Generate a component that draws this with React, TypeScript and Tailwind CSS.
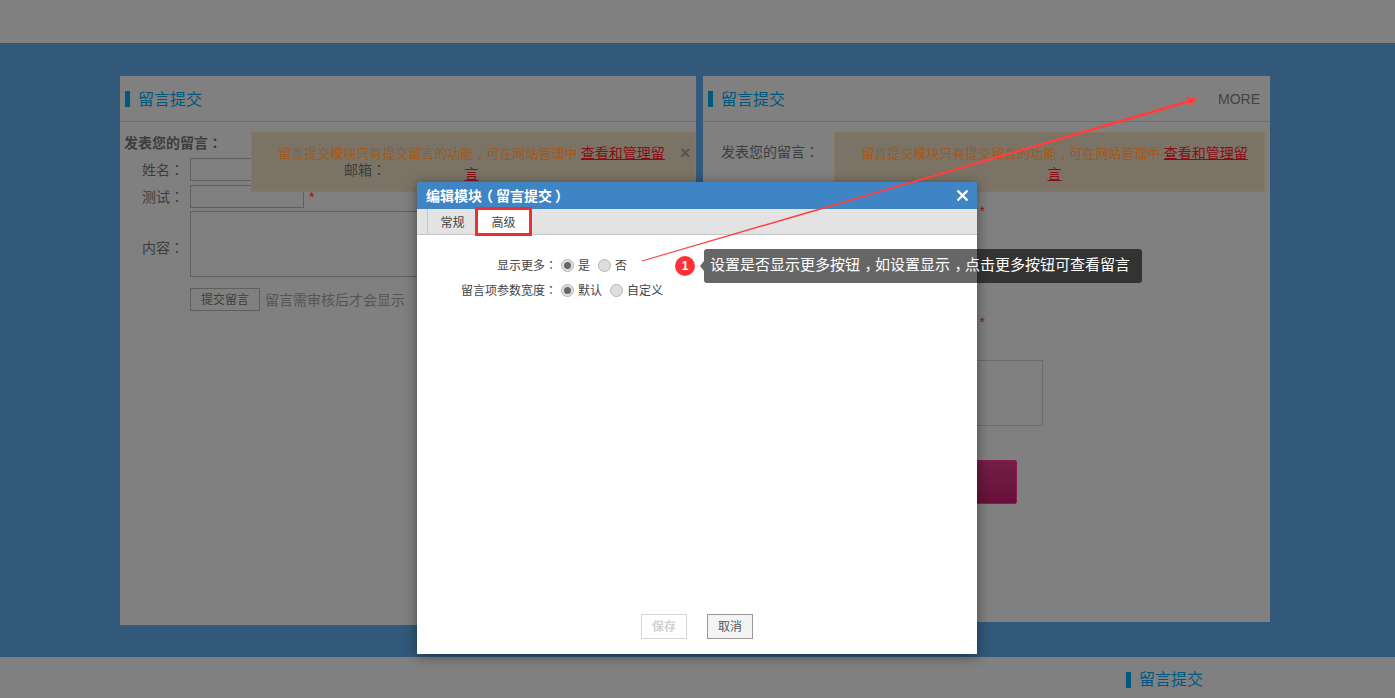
import React from 'react'

// colon sits centered in the cell in the original font, TC glyphs do that
function Mark({ children }: { children: React.ReactNode }) {
  return <span className="font-['Liberation_Sans','Noto_Sans_CJK_TC',sans-serif]">{children}</span>
}

function Comma() {
  return <span className="relative left-[0.3em]">，</span>
}

function PanelTitle({ more }: { more?: boolean }) {
  return (
    <div className="flex h-[46px] items-center justify-between border-b border-[#6f6f6f] pl-[5px] pr-[10px]">
      <div className="flex items-center gap-[8px]">
        <span className="h-4 w-[5px] bg-[#00587f]" />
        <span className="pt-[2px] text-base text-[#00587f]">留言提交</span>
      </div>
      {more && <span className="text-sm text-[#444]">MORE</span>}
    </div>
  )
}

function Notice({ className }: { className: string }) {
  return (
    <div className={`absolute top-[56px] h-[60px] border border-[#83785f] bg-[#7b7466] pt-[10px] text-center text-[13px] leading-[20px] text-[#a05a20] ${className}`}>
      留言提交模块只有提交留言的功能<Comma />可在网站管理中{' '}
      <span className="text-sm text-[#8c0c14] underline">查看和管理留言</span>
    </div>
  )
}

function LeftRow({ label, labelClass, children }: { label: string; labelClass?: string; children: React.ReactNode }) {
  return (
    <div className="flex items-center">
      <span className={`w-[66px] pr-[6px] text-right text-sm text-[#3d3d3d] ${labelClass ?? ''}`}>
        {label}<Mark>：</Mark>
      </span>
      {children}
    </div>
  )
}

function Radio({ on, label }: { on?: boolean; label: string }) {
  return (
    <span className="flex items-center gap-[4px]">
      <span className="flex h-[13px] w-[13px] items-center justify-center rounded-full border border-[#b4b4b4] bg-[#dedede]">
        {on && <span className="h-[7px] w-[7px] rounded-full bg-[#666]" />}
      </span>
      <span>{label}</span>
    </span>
  )
}

export default function App() {
  return (
    <div className="relative h-[698px] w-[1395px] overflow-hidden bg-[#808080] font-['Liberation_Sans','Noto_Sans_CJK_SC',sans-serif]">
      <div className="h-[43px]" />

      <div className="h-[614px] bg-[#32597a] pl-[120px] pt-[33px]">
        <div className="flex items-start gap-[7px]">
          {/* left module */}
          <div className="relative h-[549px] w-[576px] bg-[#808080]">
            <PanelTitle />
            <div className="flex flex-col pl-[4px] pt-[11px]">
              <div className="text-sm font-bold leading-[20px] text-[#3d3d3d]">发表您的留言<Mark>：</Mark></div>
              <div className="mt-[5px] flex flex-col gap-[4px]">
                <LeftRow label="姓名">
                  <span className="h-[23px] w-[114px] border border-[#5f5f5f]" />
                  <span className="relative z-10 ml-[40px] text-sm text-[#3d3d3d]">邮箱<Mark>：</Mark></span>
                </LeftRow>
                <LeftRow label="测试">
                  <span className="h-[23px] w-[114px] border border-[#5f5f5f]" />
                  <span className="ml-[5px] text-sm text-[#8c1a1a]">*</span>
                </LeftRow>
                <div className="-mt-[1px]">
                  <LeftRow label="内容" labelClass="pt-[8px]">
                    <span className="h-[66px] w-[300px] border border-[#5f5f5f]" />
                  </LeftRow>
                </div>
              </div>
              <div className="ml-[66px] mt-[11px] flex items-center">
                <span className="flex h-[23px] w-[70px] items-center justify-center border border-[#5f5f5f] text-xs text-[#3d3d3d]">提交留言</span>
                <span className="ml-[5px] text-sm text-[#555]">留言需审核后才会显示</span>
              </div>
            </div>
            <Notice className="left-[131px] w-[445px] pl-[25px] pr-[29px]" />
            <span className="absolute left-[560px] top-[67px] text-lg font-bold leading-[20px] text-[#555]">×</span>
          </div>

          {/* right module */}
          <div className="relative h-[546px] w-[567px] bg-[#808080]">
            <PanelTitle more />
            <div className="pl-[18px] pt-[20px] text-sm leading-[20px] text-[#3d3d3d]">发表您的留言<Mark>：</Mark></div>
            <div className="ml-[127px] mt-[39px] flex h-[20px] w-[155px] items-center justify-end text-sm text-[#8c1a1a]">*</div>
            <div className="ml-[127px] mt-[91px] flex h-[20px] w-[155px] items-center justify-end text-sm text-[#8c1a1a]">*</div>
            <div className="ml-[127px] mt-[28px] h-[66px] w-[213px] border border-[#6c6c6c]" />
            <div className="ml-[127px] mt-[34px] h-[44px] w-[187px] rounded-[2px] border border-[#8a1a52] bg-gradient-to-b from-[#701f45] to-[#680f3a]" />
            <Notice className="left-[131px] w-[431px] pl-[24px] pr-[14px]" />
          </div>
        </div>
      </div>

      <div className="flex h-[41px] items-center gap-[8px] pl-[1126px] pt-[5px]">
        <span className="h-4 w-[5px] bg-[#00587f]" />
        <span className="text-base text-[#00587f]">留言提交</span>
      </div>

      {/* dialog */}
      <div className="absolute left-[417px] top-[182px] flex h-[472px] w-[560px] flex-col bg-white shadow-[0_2px_12px_rgba(0,0,0,0.45)]">
        <div className="flex h-[27px] items-center justify-between bg-[#3f85c5] pl-[9px] pr-[8px] text-sm font-bold text-white">
          <span>
            编辑模块<span className="relative left-[-3px]">（</span>留言提交<span className="relative left-[3px]">）</span>
          </span>
          <svg width="13" height="13" viewBox="0 0 13 13" fill="none" stroke="white" strokeWidth="2.4">
            <path d="M1.5 1.5l10 10M11.5 1.5l-10 10" />
          </svg>
        </div>
        <div className="flex h-[26px] border-b border-[#c6c6c6] bg-[#e3e3e3] pl-[10px] text-xs text-[#444]">
          <span className="flex w-[48px] items-center justify-center border-l border-[#c6c6c6] pl-[2px] pt-[2px]">常规</span>
          <span className="relative -mt-[2px] flex h-[29px] w-[57px] items-center justify-center border-[3px] border-[#ee2f2f] bg-white pt-[2px]">高级</span>
        </div>
        <div className="flex flex-1 flex-col gap-[10px] pt-[23px] text-xs text-[#444]">
          <div className="flex h-[15px] items-center">
            <span className="w-[140px] text-right">显示更多<Mark>：</Mark></span>
            <div className="ml-[4px] flex gap-[8px]">
              <Radio on label="是" />
              <Radio label="否" />
            </div>
          </div>
          <div className="flex h-[15px] items-center">
            <span className="w-[140px] text-right">留言项参数宽度<Mark>：</Mark></span>
            <div className="ml-[4px] flex gap-[8px]">
              <Radio on label="默认" />
              <Radio label="自定义" />
            </div>
          </div>
        </div>
        <div className="flex justify-center gap-[20px] pb-[15px] text-xs">
          <span className="flex h-[25px] w-[46px] items-center justify-center border border-[#d4d4d4] font-bold text-[#d0d0d0]">保存</span>
          <span className="flex h-[25px] w-[46px] items-center justify-center border border-[#999] bg-[#f4f4f4] text-[#555]">取消</span>
        </div>
      </div>

      {/* tutorial arrow, the shaft gets thicker towards the head */}
      <svg className="absolute left-0 top-0" width="1395" height="698" fill="none">
        <path d="M642 261.5L1189.6 102.6L1188.8 99.8L641.8 260.5Z" fill="#ff3f3f" />
        <path d="M1198 99L1186 96.5L1189 106Z" fill="#ff3f3f" />
      </svg>

      {/* tutorial tip */}
      <div className="absolute left-[675px] top-[249px] flex items-center">
        <span className="flex h-[20px] w-[20px] items-center justify-center rounded-full bg-[#ff3236] text-xs font-bold text-white">1</span>
        <span className="ml-[5px] h-0 w-0 border-y-[5px] border-r-[4px] border-y-transparent border-r-[#666]" />
        <span className="flex h-[34px] w-[438px] items-center rounded-[3px] bg-black/60 pb-[1px] pl-[6px] text-[15px] text-white">
          <span>设置是否显示更多按钮<Comma />如设置显示<Comma />点击更多按钮可查看留言</span>
        </span>
      </div>
    </div>
  )
}
